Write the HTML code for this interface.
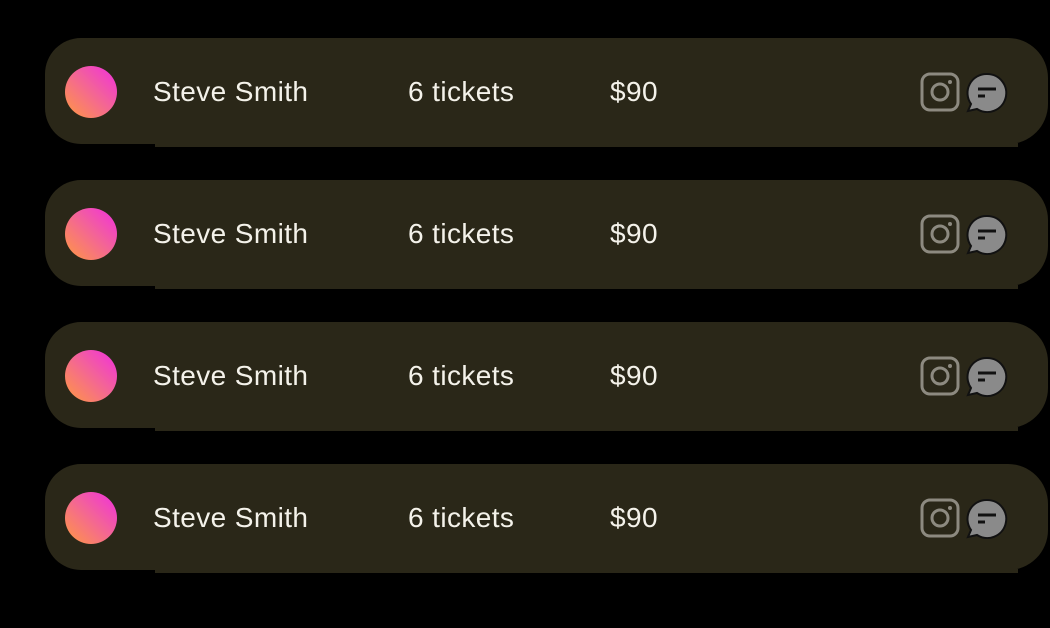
<!DOCTYPE html>
<html><head><style>
html,body{margin:0;padding:0;background:#000;width:1050px;height:628px;overflow:hidden;font-family:"Liberation Sans",sans-serif}
.row{position:absolute;left:45px;width:1003px;height:106px;background:#2a2718;border-radius:36px 40px 40px 36px}
.row::after{content:"";position:absolute;left:110px;right:30px;bottom:-3px;height:4px;background:#2a2718}
.av{position:absolute;left:20px;top:28px;width:52px;height:52px;border-radius:50%;background:linear-gradient(225deg,#f02ee0 0%,#f3629a 45%,#ff9a40 100%)}
.t{position:absolute;top:37px;color:#f4f2ea;font-size:28px;line-height:34px;letter-spacing:0.4px}
.ig{position:absolute;left:875px;top:34px}
.ch{position:absolute;left:920px;top:34px}
</style></head><body>
<div class="row" style="top:38px"><div class="av"></div><div class="t" style="left:108px">Steve Smith</div><div class="t" style="left:363px">6 tickets</div><div class="t" style="left:565px">$90</div>
<svg class="ig" width="40" height="40" viewBox="0 0 40 40"><rect x="2" y="2" width="36" height="36" rx="8" fill="none" stroke="#8d8a80" stroke-width="3"/><circle cx="20" cy="20" r="8" fill="none" stroke="#8d8a80" stroke-width="3"/><circle cx="30" cy="10" r="2" fill="#8d8a80"/></svg>
<svg class="ch" width="44" height="42" viewBox="0 0 44 42"><path d="M22 2A19 19 0 1 1 12 37L3 39L6 32A19 19 0 0 1 22 2Z" fill="#8a8a8a" stroke="#111" stroke-width="2"/><path d="M13 17H31M13 24H20" stroke="#111" stroke-width="3"/></svg></div>
<div class="row" style="top:180px"><div class="av"></div><div class="t" style="left:108px">Steve Smith</div><div class="t" style="left:363px">6 tickets</div><div class="t" style="left:565px">$90</div>
<svg class="ig" width="40" height="40" viewBox="0 0 40 40"><rect x="2" y="2" width="36" height="36" rx="8" fill="none" stroke="#8d8a80" stroke-width="3"/><circle cx="20" cy="20" r="8" fill="none" stroke="#8d8a80" stroke-width="3"/><circle cx="30" cy="10" r="2" fill="#8d8a80"/></svg>
<svg class="ch" width="44" height="42" viewBox="0 0 44 42"><path d="M22 2A19 19 0 1 1 12 37L3 39L6 32A19 19 0 0 1 22 2Z" fill="#8a8a8a" stroke="#111" stroke-width="2"/><path d="M13 17H31M13 24H20" stroke="#111" stroke-width="3"/></svg></div>
<div class="row" style="top:322px"><div class="av"></div><div class="t" style="left:108px">Steve Smith</div><div class="t" style="left:363px">6 tickets</div><div class="t" style="left:565px">$90</div>
<svg class="ig" width="40" height="40" viewBox="0 0 40 40"><rect x="2" y="2" width="36" height="36" rx="8" fill="none" stroke="#8d8a80" stroke-width="3"/><circle cx="20" cy="20" r="8" fill="none" stroke="#8d8a80" stroke-width="3"/><circle cx="30" cy="10" r="2" fill="#8d8a80"/></svg>
<svg class="ch" width="44" height="42" viewBox="0 0 44 42"><path d="M22 2A19 19 0 1 1 12 37L3 39L6 32A19 19 0 0 1 22 2Z" fill="#8a8a8a" stroke="#111" stroke-width="2"/><path d="M13 17H31M13 24H20" stroke="#111" stroke-width="3"/></svg></div>
<div class="row" style="top:464px"><div class="av"></div><div class="t" style="left:108px">Steve Smith</div><div class="t" style="left:363px">6 tickets</div><div class="t" style="left:565px">$90</div>
<svg class="ig" width="40" height="40" viewBox="0 0 40 40"><rect x="2" y="2" width="36" height="36" rx="8" fill="none" stroke="#8d8a80" stroke-width="3"/><circle cx="20" cy="20" r="8" fill="none" stroke="#8d8a80" stroke-width="3"/><circle cx="30" cy="10" r="2" fill="#8d8a80"/></svg>
<svg class="ch" width="44" height="42" viewBox="0 0 44 42"><path d="M22 2A19 19 0 1 1 12 37L3 39L6 32A19 19 0 0 1 22 2Z" fill="#8a8a8a" stroke="#111" stroke-width="2"/><path d="M13 17H31M13 24H20" stroke="#111" stroke-width="3"/></svg></div>
</body></html>
